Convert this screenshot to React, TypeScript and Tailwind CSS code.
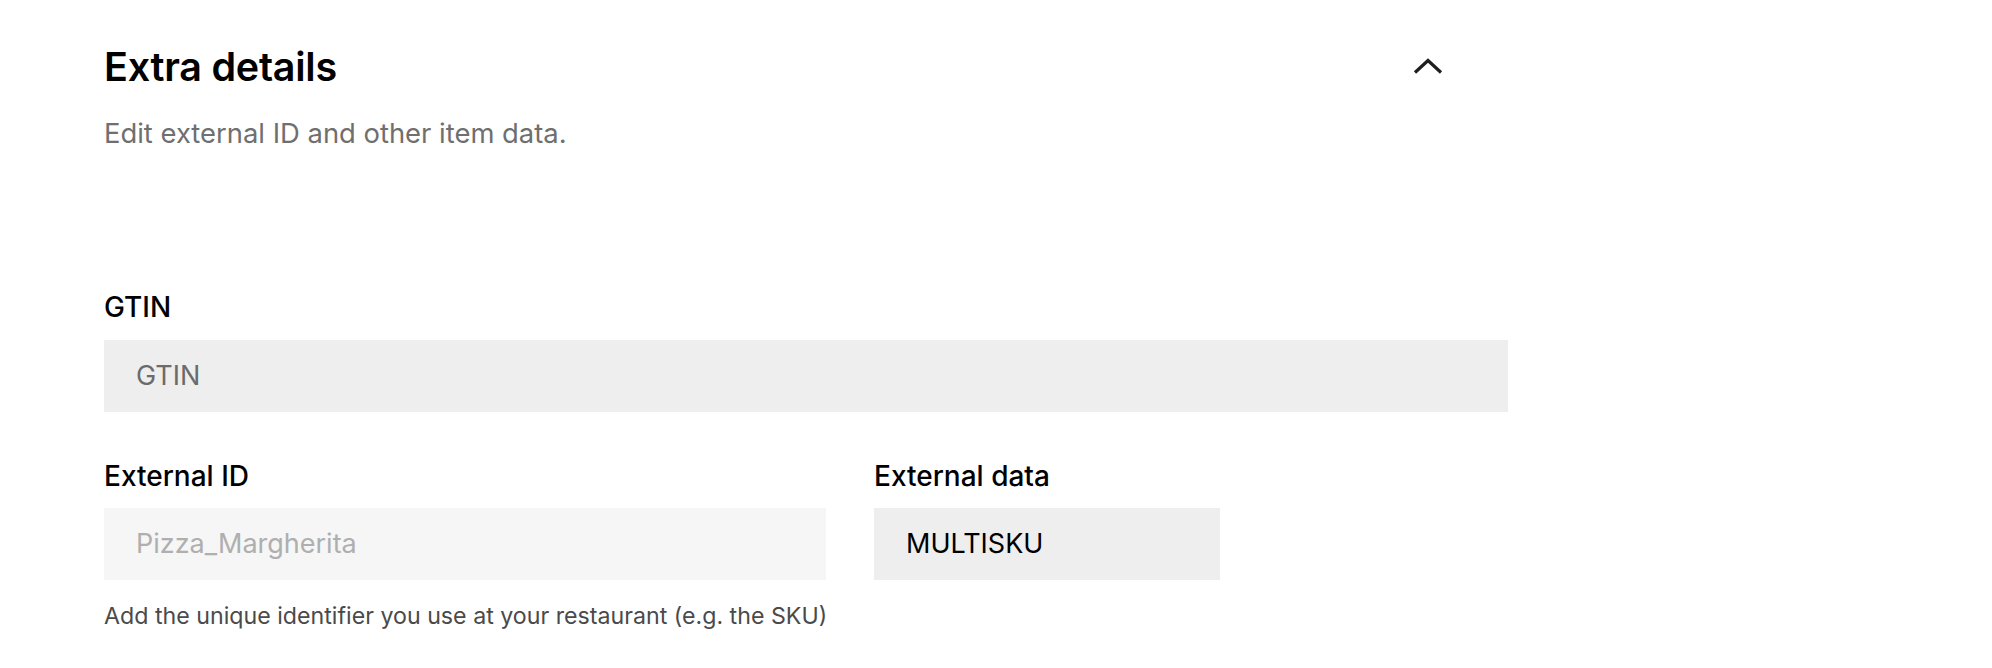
import React from "react";

export default function App() {
  return (
    <div className="w-full h-[668px] bg-white font-['Inter',sans-serif] text-black pl-[104px] pt-[43px]">
      <div className="w-[1404px]">
        <div className="flex items-start justify-between">
          <h2 className="text-[39.5px] leading-[48px] font-semibold tracking-[-0.25px]">Extra details</h2>
          <button className="w-12 h-12 mr-[56px] -mt-[1px] flex items-center justify-center">
            <svg width="30" height="16" viewBox="0 0 30 16" fill="none">
              <path d="M2 14.5 L15 2.5 L28 14.5" stroke="#1f1f1f" strokeWidth="3.2" />
            </svg>
          </button>
        </div>
        <p className="mt-[24px] text-[27.4px] leading-[36px] text-[#6f6f6f]">Edit external ID and other item data.</p>

        <div className="mt-[138px]">
          <label className="block text-[28px] leading-[36px] font-medium">GTIN</label>
          <div className="mt-[15px] h-[72px] bg-[#eeeeee] flex items-center px-[32px] text-[27px] text-[#6b6b6b]">GTIN</div>
        </div>

        <div className="mt-[46px] flex gap-[48px] items-start">
          <div className="flex flex-col w-[722px]">
            <label className="block text-[28px] leading-[36px] font-medium">External ID</label>
            <div className="mt-[14px] h-[72px] bg-[#f6f6f6] flex items-center px-[32px] text-[27px] text-[#afafaf]">Pizza_Margherita</div>
            <p className="mt-[20px] text-[23.2px] leading-[32px] text-[#4a4a4a] whitespace-nowrap">Add the unique identifier you use at your restaurant (e.g. the SKU)</p>
          </div>
          <div className="flex flex-col w-[346px]">
            <label className="block text-[28px] leading-[36px] font-medium">External data</label>
            <div className="mt-[14px] h-[72px] bg-[#eeeeee] flex items-center px-[32px] text-[27px] text-black">MULTISKU</div>
          </div>
        </div>
      </div>
    </div>
  );
}
